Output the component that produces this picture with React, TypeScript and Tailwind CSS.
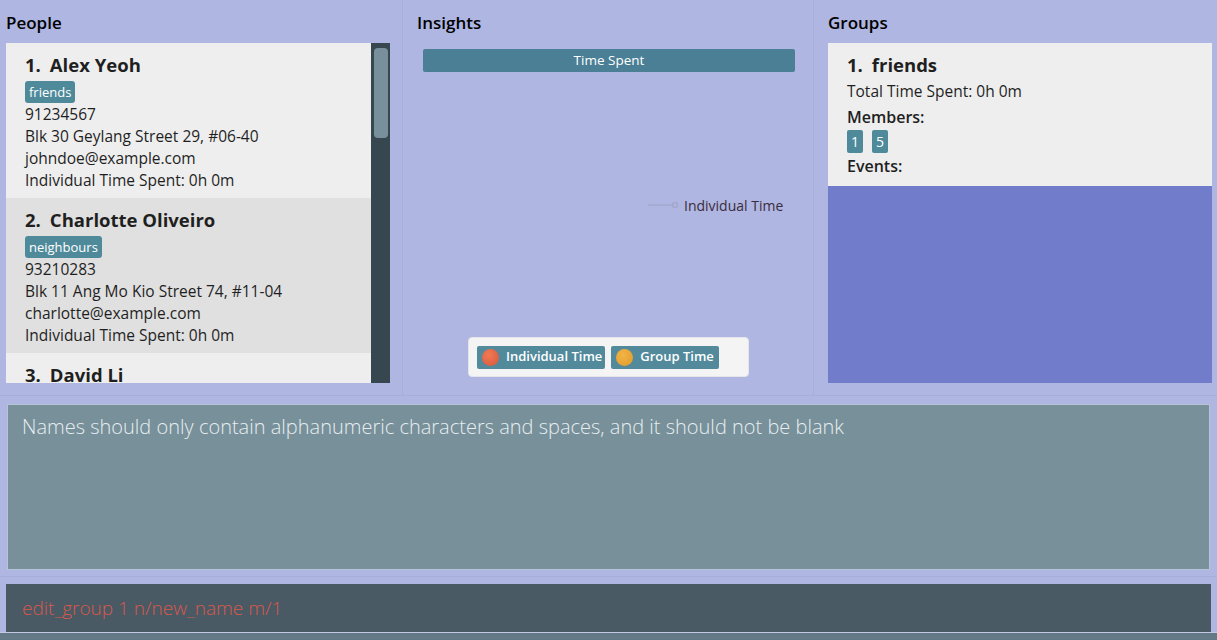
const font = { fontFamily: '"Open Sans", "Noto Sans", sans-serif' };

type Person = {
  name: string;
  tag: string;
  phone: string;
  address: string;
  email: string;
};

const people: Person[] = [
  {
    name: "Alex Yeoh",
    tag: "friends",
    phone: "91234567",
    address: "Blk 30 Geylang Street 29, #06-40",
    email: "johndoe@example.com",
  },
  {
    name: "Charlotte Oliveiro",
    tag: "neighbours",
    phone: "93210283",
    address: "Blk 11 Ang Mo Kio Street 74, #11-04",
    email: "charlotte@example.com",
  },
  {
    name: "David Li",
    tag: "family",
    phone: "91031282",
    address: "Blk 436 Serangoon Gardens Street 26, #16-43",
    email: "lidavid@example.com",
  },
];

function PersonCard({ p, i }: { p: Person; i: number }) {
  return (
    <div className={`h-[155px] shrink-0 pl-[19px] pt-[10px] ${i % 2 === 0 ? "bg-[#eeeeee]" : "bg-[#e0e0e0]"}`}>
      <div className="flex h-[24px] items-center gap-[9px] text-[18.5px] font-bold text-[#1f1f1f]">
        <span>{i + 1}.</span>
        <span>{p.name}</span>
      </div>
      <div className="mt-[4px] flex h-[22px]">
        <span className="rounded-[3px] bg-[#4f8a9b] px-[4px] text-[13px] leading-[22px] text-white">{p.tag}</span>
      </div>
      <div className="text-[15.5px] leading-[22px] text-[#1f1f1f]">
        <div>{p.phone}</div>
        <div>{p.address}</div>
        <div>{p.email}</div>
        <div>Individual Time Spent: 0h 0m</div>
      </div>
    </div>
  );
}

export default function App() {
  return (
    <div className="flex h-[640px] w-[1217px] flex-col overflow-hidden bg-[#afb6e2]" style={font}>
      <div className="flex h-[396px] shrink-0 border-b border-[#a6aed9]">
        {/* people */}
        <div className="flex w-[403px] flex-col border-r border-[#a6aed9] pl-[6px]">
          <div className="flex h-[43px] items-center pt-[3px] text-[17px] font-semibold text-black">People</div>
          <div className="flex h-[340px] w-[384px] overflow-hidden">
            <div className="flex w-[365px] flex-col overflow-hidden">
              {people.map((p, i) => (
                <PersonCard key={p.name} p={p} i={i} />
              ))}
            </div>
            <div className="w-[19px] bg-[#37474f] pl-[3px] pt-[5px]">
              <div className="h-[90px] w-[14px] rounded-[4px] bg-[#78909c]" />
            </div>
          </div>
        </div>

        {/* insights */}
        <div className="flex w-[411px] flex-col border-r border-[#a6aed9] pl-[14px]">
          <div className="flex h-[43px] items-center pt-[3px] text-[17px] font-semibold text-black">Insights</div>
          <div className="ml-[6px] mt-[6px] flex h-[23px] w-[372px] items-center justify-center rounded-[2px] bg-[#4a7f96] text-[13.5px] text-white">
            Time Spent
          </div>
          <div className="mt-[123px] flex h-[20px] items-center pl-[231px]">
            <svg width="32" height="8" viewBox="0 0 32 8">
              <line x1="0" y1="4" x2="26" y2="4" stroke="#a3a8cc" strokeWidth="1.5" />
              <circle cx="27" cy="4" r="2.5" fill="none" stroke="#a3a8cc" strokeWidth="1.5" />
            </svg>
            <span className="ml-[4px] text-[14px] text-[#3a2c3c]">Individual Time</span>
          </div>
          <div className="ml-[51px] mt-[122px] flex h-[40px] w-[281px] items-center gap-[6px] rounded-[4px] border border-[#e4e4ea] bg-[#f4f4f4] pl-[8px]">
            <div className="flex h-[23px] items-center gap-[7px] rounded-[2px] bg-[#528a9c] pl-[5px] pr-[3px] text-[13px] font-semibold text-white">
              <span className="h-[17px] w-[17px] rounded-full bg-[radial-gradient(circle_at_40%_35%,#f07a55,#d9553a)]" />
              Individual Time
            </div>
            <div className="flex h-[23px] items-center gap-[7px] rounded-[2px] bg-[#528a9c] pl-[5px] pr-[5px] text-[13px] font-semibold text-white">
              <span className="h-[17px] w-[17px] rounded-full bg-[radial-gradient(circle_at_40%_35%,#f2b346,#e09a2a)]" />
              Group Time
            </div>
          </div>
        </div>

        {/* groups */}
        <div className="flex flex-1 flex-col pl-[14px] pr-[5px]">
          <div className="flex h-[43px] items-center pt-[3px] text-[17px] font-semibold text-black">Groups</div>
          <div className="flex h-[340px] flex-col">
            <div className="h-[143px] bg-[#eeeeee] pl-[19px] pt-[10px] text-[#1f1f1f]">
              <div className="flex h-[24px] items-center gap-[9px] text-[18.5px] font-bold">
                <span>1.</span>
                <span>friends</span>
              </div>
              <div className="mt-[3px] text-[15.5px] leading-[22px]">Total Time Spent: 0h 0m</div>
              <div className="mt-[4px] text-[16px] font-semibold leading-[22px]">Members:</div>
              <div className="mt-[2px] flex h-[23px] gap-[9px]">
                <span className="rounded-[2px] bg-[#4f8a9b] px-[4px] text-[14px] leading-[23px] text-white">1</span>
                <span className="rounded-[2px] bg-[#4f8a9b] px-[4px] text-[14px] leading-[23px] text-white">5</span>
              </div>
              <div className="mt-[2px] text-[16px] font-semibold leading-[22px]">Events:</div>
            </div>
            <div className="flex-1 bg-[#717dcb]" />
          </div>
        </div>
      </div>

      {/* result */}
      <div className="h-[181px] shrink-0 border-b border-[#a6aed9] px-[7px] pt-[8px]">
        <div className="h-[166px] border border-[#b7c3d6] bg-[#78909a] px-[14px] pt-[8px] text-[20px] font-light leading-[28px] text-[#e6eef0]">
          Names should only contain alphanumeric characters and spaces, and it should not be blank
        </div>
      </div>

      {/* command */}
      <div className="flex-1 px-[6px] pt-[7px]">
        <div className="flex h-[48px] items-center bg-[#495a65] px-[16px] text-[19px] font-light text-[#d9584a]">
          edit_group 1 n/new_name m/1
        </div>
      </div>
      <div className="h-[8px] shrink-0 border-t border-[#c4cae6] bg-[#637985]" />
    </div>
  );
}
